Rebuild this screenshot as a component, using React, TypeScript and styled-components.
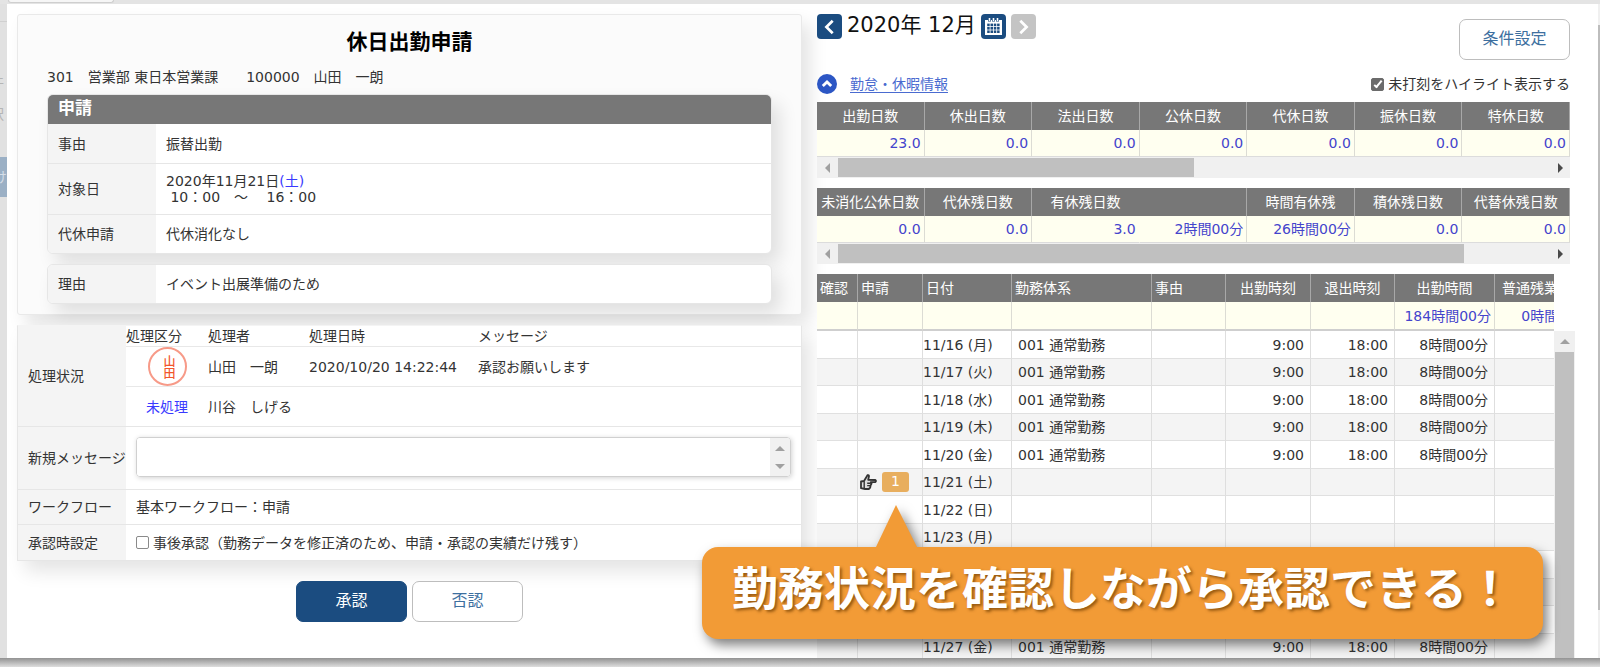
import React from "react";
import styled, { createGlobalStyle, css } from "styled-components";

const Global = createGlobalStyle`
  *, *::before, *::after { box-sizing: border-box; }
  html, body { margin: 0; height: 100%; }
  body {
    background: #e4e4e4;
    color: #333;
    font: 14px/18px "DejaVu Sans", "Noto Sans CJK JP", sans-serif;
    overflow: hidden;
  }
  button, textarea, input { font: inherit; margin: 0; }
  table { border-collapse: separate; border-spacing: 0; table-layout: fixed; width: 100%; }
  th { font-weight: 400; text-align: left; }
  td, th { padding: 0; }
`;

const Page = styled.div`
  display: flex;
  flex-direction: column;
  height: 100vh;
  overflow: hidden;
`;

const TabStrip = styled.div`
  flex: none;
  height: 4px;
  padding-left: 8px;
`;

const Tab = styled.div`
  width: 106px;
  height: 3px;
  background: #f6f6f6;
  border: 1px solid #cfcfcf;
  border-top: 0;
  border-radius: 0 0 3px 3px;
`;

const Middle = styled.div`
  flex: 1;
  min-height: 0;
  display: flex;
`;

const SideStrip = styled.div`
  flex: none;
  width: 7px;
  display: flex;
  flex-direction: column;
  padding-top: 17px;
  background: #e1e1e1;
  color: #b5b5b5;
`;

const SideItem = styled.div<{ $active?: boolean }>`
  display: flex;
  justify-content: flex-end;
  align-items: center;
  height: 32px;
  overflow: hidden;
  padding-right: 3px;
  ${(p) =>
    p.$active &&
    css`
      height: 40px;
      margin-top: 27px;
      padding-right: 0;
      background: #9bb0c5;
      color: #d5dee8;
    `}
`;

const SideRule = styled.div`
  height: 45px;
  border-top: 1px solid #d0d0d0;
`;

const Modal = styled.main`
  flex: 1;
  min-width: 0;
  display: flex;
  background: #fff;
  position: relative;
`;

const Footer = styled.div`
  flex: none;
  height: 9px;
  background: linear-gradient(#929292, #b4b4b4 45%, #dedede);
`;

const Left = styled.section`
  flex: 785 1 0;
  min-width: 0;
  padding: 10px 0 0 10px;
`;

const Right = styled.section`
  flex: 758 1 0;
  min-width: 0;
  margin-left: 15px;
  display: flex;
  flex-direction: column;
  overflow: hidden;
`;

const cardShadow = css`
  box-shadow: 8px 10px 18px rgba(0, 0, 0, 0.11);
`;

const Sheet = styled.div`
  padding: 15px 29px 10px;
  background: #fbfbfb;
  border: 1px solid #e9e9e9;
  border-radius: 3px;
  ${cardShadow}
`;

const Title = styled.h1`
  margin: 0;
  font-size: 21px;
  line-height: 24px;
  font-weight: 700;
  text-align: center;
  color: #000;
`;

const Employee = styled.p`
  margin: 14px 0 8px;
  white-space: pre;
`;

const Card = styled.div`
  background: #fff;
  border: 1px solid #e6e6e6;
  border-radius: 6px;
  overflow: hidden;
  ${cardShadow}
  & + & {
    margin-top: 10px;
  }
`;

const CardTitle = styled.h2`
  margin: 0;
  height: 29px;
  padding-left: 10px;
  font-size: 17px;
  line-height: 26px;
  font-weight: 700;
  color: #fff;
  background: #777;
`;

const Row = styled.tr<{ $h: number }>`
  height: ${(p) => p.$h}px;
  &:not(:first-child) > * {
    border-top: 1px solid #e6e6e6;
  }
`;

const Label = styled.th`
  width: 108px;
  padding-left: 10px;
  background: #f4f4f4;
  white-space: nowrap;
`;

const Value = styled.td<{ $flush?: boolean }>`
  padding-left: ${(p) => (p.$flush ? 0 : 10)}px;
  line-height: 16px;
  white-space: pre;
`;

const Blue = styled.span`
  color: #3a3aff;
`;

const Process = styled.div`
  margin-top: 10px;
  background: #fff;
  border: 1px solid #e6e6e6;
  border-top-color: #f4f4f4;
  ${cardShadow}
`;

const HistoryHead = styled.th<{ $w?: number }>`
  height: 20px;
  ${(p) => p.$w && `width: ${p.$w}px;`}
`;

const HistoryRow = styled.tr`
  height: 40px;
  & > td {
    border-top: 1px solid #e8e8e8;
  }
`;

const HistoryMark = styled.td`
  padding-left: 20px;
`;

const Seal = styled.span`
  display: flex;
  align-items: center;
  justify-content: center;
  width: 39px;
  height: 39px;
  margin-left: 2px;
  padding: 2px 0 0 4px;
  border: 2px solid #f79a88;
  border-radius: 50%;
  color: #f2562e;
  font-size: 12px;
  line-height: 12px;
  font-weight: 500;
`;

const SealText = styled.span`
  width: 12px;
  white-space: normal;
  word-break: break-all;
`;

const MessageBox = styled.div`
  display: flex;
  height: 40px;
  margin: 0 10px 2px 0;
  border: 1px solid #d0d0d0;
  border-radius: 4px;
  overflow: hidden;
  box-shadow: 1px 1px 5px rgba(0, 0, 0, 0.18);
`;

const MessageInput = styled.textarea`
  flex: 1;
  min-width: 0;
  border: 0;
  outline: 0;
  resize: none;
  padding: 4px;
  overflow: hidden;
`;

const Spin = styled.div`
  width: 20px;
  background: #f1f1f1;
  display: flex;
  flex-direction: column;
  align-items: center;
  justify-content: space-around;
  padding: 2px 0;
`;

const CheckLabel = styled.label`
  display: flex;
  align-items: center;
  gap: 4px;
`;

const Check = styled.input`
  appearance: none;
  position: relative;
  flex: none;
  width: 13px;
  height: 13px;
  border: 1px solid #8a8a8a;
  border-radius: 2px;
  background: #fff;
  &:checked {
    background: #6b6b6b;
    border-color: #6b6b6b;
  }
  &:checked::after {
    content: "";
    position: absolute;
    left: 4px;
    top: 0;
    width: 4px;
    height: 9px;
    border: solid #fff;
    border-width: 0 2px 2px 0;
    transform: rotate(40deg);
  }
`;

const Actions = styled.div`
  display: flex;
  justify-content: center;
  gap: 5px;
  margin-top: 20px;
`;

const Button = styled.button<{ $primary?: boolean }>`
  width: 111px;
  height: 41px;
  padding: 0 0 1px;
  font-size: 16px;
  border-radius: 7px;
  border: 1px solid ${(p) => (p.$primary ? "#1b4c80" : "#bdbdbd")};
  background: ${(p) => (p.$primary ? "#1b4c80" : "#fff")};
  color: ${(p) => (p.$primary ? "#fff" : "#3d6f9f")};
`;

const Upper = styled.div`
  flex: none;
  padding: 10px 5px 0 0;
`;

const MonthBar = styled.div`
  display: flex;
  justify-content: space-between;
  align-items: flex-start;
  height: 56px;
`;

const Month = styled.div`
  display: flex;
  align-items: center;
  gap: 5px;
  font-size: 21px;
  line-height: 22px;
  color: #111;
`;

const MonthText = styled.span`
  padding-bottom: 3px;
  white-space: pre;
`;

const SquareButton = styled.button<{ $off?: boolean }>`
  display: flex;
  align-items: center;
  justify-content: center;
  width: 25px;
  height: 25px;
  padding: 0;
  border: 0;
  border-radius: 4px;
  background: ${(p) => (p.$off ? "#c4c4c4" : "#1b4c80")};
`;

const SettingsWrap = styled.div`
  padding-top: 5px;
`;

const InfoBar = styled.div`
  display: flex;
  align-items: center;
  justify-content: space-between;
  height: 32px;
  padding-bottom: 4px;
`;

const InfoLeft = styled.div`
  display: flex;
  align-items: center;
  gap: 13px;
`;

const RoundButton = styled.button`
  display: flex;
  align-items: center;
  justify-content: center;
  width: 20px;
  height: 20px;
  padding: 0;
  border: 0;
  border-radius: 50%;
  background: #2c56c4;
`;

const InfoLink = styled.a`
  color: #4a6bd0;
  text-underline-offset: 3px;
`;

const Summary = styled.div`
  margin-bottom: 10px;
`;

const SumHead = styled.th<{ $open?: boolean }>`
  height: 28px;
  text-align: center;
  white-space: nowrap;
  color: #fff;
  background: #777;
  border-right: 1px solid ${(p) => (p.$open ? "#777" : "#a8a8a8")};
`;

const SumCell = styled.td<{ $open?: boolean }>`
  height: 27px;
  padding-right: 3px;
  text-align: right;
  white-space: nowrap;
  color: #4444cc;
  background: #fffff0;
  border-right: 1px solid ${(p) => (p.$open ? "#fffff0" : "#dcdcd4")};
  border-bottom: 1px solid #dcdcdc;
`;

const HScroll = styled.div`
  display: flex;
  align-items: center;
  height: 21px;
  background: #f0f0f0;
`;

const ArrowSlot = styled.span`
  flex: none;
  display: flex;
  align-items: center;
  justify-content: center;
  width: 21px;
  height: 21px;
`;

const HTrack = styled.div`
  flex: 1;
  height: 19px;
`;

const HThumb = styled.div<{ $pct: number }>`
  width: ${(p) => p.$pct}%;
  height: 100%;
  background: #c0c0c0;
`;

const Daily = styled.div`
  flex: 1;
  min-height: 0;
  display: flex;
`;

const DailyClip = styled.div`
  flex: 1;
  min-width: 0;
  overflow: hidden;
`;

const DailyTable = styled.table`
  width: 777px;
`;

const DayHead = styled.th<{ $center?: boolean }>`
  height: 28px;
  padding-left: ${(p) => (p.$center ? 0 : 3)}px;
  text-align: ${(p) => (p.$center ? "center" : "left")};
  white-space: nowrap;
  color: #fff;
  background: #777;
  border-right: 1px solid #a8a8a8;
`;

const TotalCell = styled.td`
  height: 29px;
  padding-right: 3px;
  text-align: right;
  color: #4444cc;
  background: #fffff0;
  border-right: 1px solid #dcdcd4;
  border-bottom: 2px solid #cfcfcf;
`;

const DayRow = styled.tr`
  height: 28px;
  background: #fff;
  &:nth-child(even) {
    height: 27px;
    background: #f4f4f4;
  }
`;

const DayCell = styled.td<{ $right?: boolean; $pad?: number }>`
  border-right: 1px solid #dedede;
  border-bottom: 1px solid #e0e0e0;
  padding: ${(p) => (p.$right ? "0 6px 0 0" : `0 0 0 ${p.$pad ?? 0}px`)};
  text-align: ${(p) => (p.$right ? "right" : "left")};
  white-space: nowrap;
`;

const Request = styled.div`
  display: flex;
  align-items: center;
  gap: 5px;
  padding-left: 2px;
`;

const RequestCount = styled.span`
  width: 27px;
  height: 20px;
  border-radius: 3px;
  background: #e8ae5e;
  color: #fff;
  text-align: center;
`;

const VScroll = styled.div`
  flex: none;
  display: flex;
  flex-direction: column;
  align-items: center;
  width: 21px;
  margin-top: 57px;
  background: #f0f0f0;
`;

const VThumb = styled.div`
  flex: 1;
  width: 19px;
  background: #c0c0c0;
`;

const PageScroll = styled.div`
  flex: none;
  width: 2px;
  margin-left: 23px;
  padding: 21px 0 48px;
  background: #f0f0f0;
`;

const PageThumb = styled.div`
  height: 100%;
  background: #bdbdbd;
`;

const Callout = styled.aside`
  position: absolute;
  right: 57px;
  bottom: 19px;
  height: 92px;
  padding: 0 30px 8px;
  border-radius: 16px;
  background: #f29b36;
  color: #fff;
  font-size: 46px;
  line-height: 84px;
  font-weight: 700;
  white-space: nowrap;
  text-shadow: 2px 2px 3px rgba(110, 60, 0, 0.7);
  filter: drop-shadow(4px 6px 6px rgba(0, 0, 0, 0.5));
`;

const CalloutTail = styled.svg`
  position: absolute;
  left: 173px;
  top: -42px;
`;

const Arrow = ({ dir, dark }: { dir: "up" | "down" | "left" | "right"; dark?: boolean }) => {
  const paths = {
    up: "M1 8 L6 3 L11 8Z",
    down: "M1 4 L6 9 L11 4Z",
    left: "M8 1 L3 6 L8 11Z",
    right: "M4 1 L9 6 L4 11Z",
  };
  return (
    <svg width="12" height="12" viewBox="0 0 12 12" aria-hidden="true">
      <path d={paths[dir]} fill={dark ? "#4a4a4a" : "#a0a0a0"} />
    </svg>
  );
};

const HandIcon = () => (
  <svg width="17" height="18" viewBox="0 0 17 18" aria-hidden="true">
    <path
      d="M1 8.5 L4 8 L7.5 2.2 Q9 1.6 9 3.4 L8.2 6.8 L15.3 7 Q16.6 8 15.3 9 L10.8 9.2 L11.6 10.6 L10.6 12.4 L10.2 14.6 L8.8 16 L5 16 L1 15.2Z"
      fill="#ddd"
      stroke="#333"
      strokeWidth="1.8"
      strokeLinejoin="round"
    />
    <path d="M4.2 8.2 V15.6 M7.2 10.2 H10.8 M7.2 12.6 H10.6" stroke="#333" strokeWidth="1.4" fill="none" />
  </svg>
);

const CalendarIcon = () => (
  <svg width="19" height="19" viewBox="0 0 19 19" aria-hidden="true">
    <path d="M1 3 H18 V18 H1Z" fill="#fff" />
    <path d="M5.5 1 V4.6 M9.5 1 V4.6 M13.5 1 V4.6" stroke="#1b4c80" strokeWidth="3" />
    <path d="M5.5 1 V4 M9.5 1 V4 M13.5 1 V4" stroke="#fff" strokeWidth="1.6" />
    <g fill="#1b4c80">
      {[6.6, 10, 13.4].map((y) =>
        [3.2, 6.5, 9.8, 13.1].map((x) => <rect key={`${x}-${y}`} x={x} y={y} width="2.5" height="2.6" />)
      )}
    </g>
  </svg>
);

const Chevron = ({ d, size, width }: { d: string; size: number; width: number }) => (
  <svg width={size} height={size} viewBox="0 0 20 20" aria-hidden="true">
    <path d={d} fill="none" stroke="#fff" strokeWidth={width} />
  </svg>
);

type SumItem = { head: string; value: string; open?: boolean };

const leave: SumItem[] = ["出勤日数", "休出日数", "法出日数", "公休日数", "代休日数", "振休日数", "特休日数"].map(
  (head, i) => ({ head, value: i === 0 ? "23.0" : "0.0" })
);

const remaining: SumItem[] = [
  { head: "未消化公休日数", value: "0.0" },
  { head: "代休残日数", value: "0.0" },
  { head: "有休残日数", value: "3.0", open: true },
  { head: "", value: "2時間00分" },
  { head: "時間有休残", value: "26時間00分" },
  { head: "積休残日数", value: "0.0" },
  { head: "代替休残日数", value: "0.0" },
];

const SummaryTable = ({ items, pct }: { items: SumItem[]; pct: number }) => (
  <Summary>
    <table>
      <thead>
        <tr>
          {items.map((it, i) => (
            <SumHead key={i} $open={it.open}>
              {it.head}
            </SumHead>
          ))}
        </tr>
      </thead>
      <tbody>
        <tr>
          {items.map((it, i) => (
            <SumCell key={i} $open={it.open}>
              {it.value}
            </SumCell>
          ))}
        </tr>
      </tbody>
    </table>
    <HScroll aria-hidden="true">
      <ArrowSlot>
        <Arrow dir="left" />
      </ArrowSlot>
      <HTrack>
        <HThumb $pct={pct} />
      </HTrack>
      <ArrowSlot>
        <Arrow dir="right" dark />
      </ArrowSlot>
    </HScroll>
  </Summary>
);

const columns: { name: string; w: number; center?: boolean }[] = [
  { name: "確認", w: 41 },
  { name: "申請", w: 65 },
  { name: "日付", w: 89 },
  { name: "勤務体系", w: 140 },
  { name: "事由", w: 74 },
  { name: "出勤時刻", w: 85, center: true },
  { name: "退出時刻", w: 84, center: true },
  { name: "出勤時間", w: 100, center: true },
  { name: "普通残業時間", w: 99, center: true },
];

const weekdays = ["日", "月", "火", "水", "木", "金", "土"];
const days = Array.from({ length: 13 }, (_, i) => {
  const day = 16 + i;
  const wd = (i + 1) % 7;
  return {
    label: `11/${day} (${weekdays[wd]})`,
    work: wd !== 0 && wd !== 6 && day !== 23,
    requested: day === 21,
  };
});

export default function App() {
  return (
    <Page lang="ja">
      <Global />
      <TabStrip>
        <Tab />
      </TabStrip>
      <Middle>
        <SideStrip aria-hidden="true">
          <SideRule />
          <SideItem>件</SideItem>
          <SideItem>択</SideItem>
          <SideItem $active>け</SideItem>
        </SideStrip>
        <Modal>
          <Left>
            <Sheet>
              <Title>休日出勤申請</Title>
              <Employee>{"301　営業部 東日本営業課　　100000　山田　一朗"}</Employee>
              <Card>
                <CardTitle>申請</CardTitle>
                <table>
                  <tbody>
                    <Row $h={39}>
                      <Label scope="row">事由</Label>
                      <Value>振替出勤</Value>
                    </Row>
                    <Row $h={51}>
                      <Label scope="row">対象日</Label>
                      <Value>
                        2020年11月21日<Blue>(土)</Blue>
                        {"\n 10：00　～　 16：00"}
                      </Value>
                    </Row>
                    <Row $h={39}>
                      <Label scope="row">代休申請</Label>
                      <Value>代休消化なし</Value>
                    </Row>
                  </tbody>
                </table>
              </Card>
              <Card>
                <table>
                  <tbody>
                    <Row $h={38}>
                      <Label scope="row">理由</Label>
                      <Value>イベント出展準備のため</Value>
                    </Row>
                  </tbody>
                </table>
              </Card>
            </Sheet>
            <Process>
              <table>
                <tbody>
                  <Row $h={100}>
                    <Label scope="row">処理状況</Label>
                    <Value $flush>
                      <table>
                        <thead>
                          <tr>
                            <HistoryHead $w={82}>処理区分</HistoryHead>
                            <HistoryHead $w={101}>処理者</HistoryHead>
                            <HistoryHead $w={169}>処理日時</HistoryHead>
                            <HistoryHead>メッセージ</HistoryHead>
                          </tr>
                        </thead>
                        <tbody>
                          <HistoryRow>
                            <HistoryMark>
                              <Seal>
                                <SealText>山田</SealText>
                              </Seal>
                            </HistoryMark>
                            <td>山田　一朗</td>
                            <td>2020/10/20 14:22:44</td>
                            <td>承認お願いします</td>
                          </HistoryRow>
                          <HistoryRow>
                            <HistoryMark>
                              <Blue>未処理</Blue>
                            </HistoryMark>
                            <td>川谷　しげる</td>
                            <td></td>
                            <td></td>
                          </HistoryRow>
                        </tbody>
                      </table>
                    </Value>
                  </Row>
                  <Row $h={63}>
                    <Label scope="row">
                      <label htmlFor="message">新規メッセージ</label>
                    </Label>
                    <Value>
                      <MessageBox>
                        <MessageInput id="message" />
                        <Spin aria-hidden="true">
                          <Arrow dir="up" />
                          <Arrow dir="down" />
                        </Spin>
                      </MessageBox>
                    </Value>
                  </Row>
                  <Row $h={35}>
                    <Label scope="row">ワークフロー</Label>
                    <Value>基本ワークフロー：申請</Value>
                  </Row>
                  <Row $h={36}>
                    <Label scope="row">承認時設定</Label>
                    <Value>
                      <CheckLabel>
                        <Check type="checkbox" />
                        事後承認（勤務データを修正済のため、申請・承認の実績だけ残す）
                      </CheckLabel>
                    </Value>
                  </Row>
                </tbody>
              </table>
            </Process>
            <Actions>
              <Button type="button" $primary>
                承認
              </Button>
              <Button type="button">否認</Button>
            </Actions>
          </Left>
          <Right>
            <Upper>
              <MonthBar>
                <Month>
                  <SquareButton type="button" aria-label="前月">
                    <Chevron d="M13 3 L6 10 L13 17" size={18} width={3} />
                  </SquareButton>
                  <MonthText>2020年 12月</MonthText>
                  <SquareButton type="button" aria-label="カレンダー">
                    <CalendarIcon />
                  </SquareButton>
                  <SquareButton type="button" aria-label="翌月" $off>
                    <Chevron d="M7 3 L14 10 L7 17" size={18} width={3} />
                  </SquareButton>
                </Month>
                <SettingsWrap>
                  <Button type="button">条件設定</Button>
                </SettingsWrap>
              </MonthBar>
              <InfoBar>
                <InfoLeft>
                  <RoundButton type="button" aria-label="閉じる">
                    <Chevron d="M4 13 L10 7 L16 13" size={14} width={4} />
                  </RoundButton>
                  <InfoLink href="#info">勤怠・休暇情報</InfoLink>
                </InfoLeft>
                <CheckLabel>
                  <Check type="checkbox" defaultChecked />
                  未打刻をハイライト表示する
                </CheckLabel>
              </InfoBar>
              <SummaryTable items={leave} pct={50} />
              <SummaryTable items={remaining} pct={88} />
            </Upper>
            <Daily>
              <DailyClip>
                <DailyTable>
                  <colgroup>
                    {columns.map((c) => (
                      <col key={c.name} width={c.w} />
                    ))}
                  </colgroup>
                  <thead>
                    <tr>
                      {columns.map((c) => (
                        <DayHead key={c.name} $center={c.center}>
                          {c.name}
                        </DayHead>
                      ))}
                    </tr>
                    <tr>
                      {columns.map((c, i) => (
                        <TotalCell key={c.name}>{i === 7 ? "184時間00分" : i === 8 ? "0時間00分" : ""}</TotalCell>
                      ))}
                    </tr>
                  </thead>
                  <tbody>
                    {days.map((d) => (
                      <DayRow key={d.label}>
                        <DayCell />
                        <DayCell>
                          {d.requested && (
                            <Request>
                              <HandIcon />
                              <RequestCount>1</RequestCount>
                            </Request>
                          )}
                        </DayCell>
                        <DayCell $pad={0}>{d.label}</DayCell>
                        <DayCell $pad={6}>{d.work && "001 通常勤務"}</DayCell>
                        <DayCell />
                        <DayCell $right>{d.work && "9:00"}</DayCell>
                        <DayCell $right>{d.work && "18:00"}</DayCell>
                        <DayCell $right>{d.work && "8時間00分"}</DayCell>
                        <DayCell />
                      </DayRow>
                    ))}
                  </tbody>
                </DailyTable>
              </DailyClip>
              <VScroll aria-hidden="true">
                <ArrowSlot>
                  <Arrow dir="up" />
                </ArrowSlot>
                <VThumb />
              </VScroll>
            </Daily>
          </Right>
          <PageScroll aria-hidden="true">
            <PageThumb />
          </PageScroll>
          <Callout>
            <CalloutTail width="44" height="44" viewBox="0 0 44 44" aria-hidden="true">
              <path d="M21 0 L43 44 H0Z" fill="#f29b36" />
            </CalloutTail>
            勤務状況を確認しながら承認できる！
          </Callout>
        </Modal>
      </Middle>
      <Footer />
    </Page>
  );
}
